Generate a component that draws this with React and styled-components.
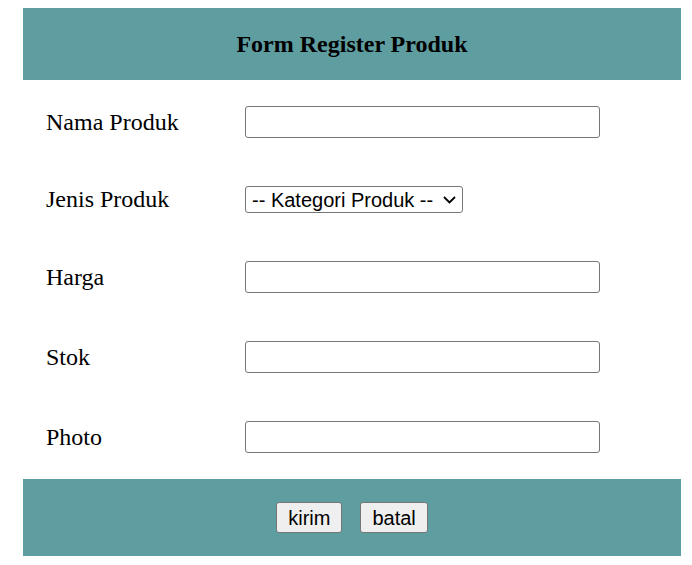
import React from 'react';
import styled, { createGlobalStyle } from 'styled-components';

const GlobalStyle = createGlobalStyle`
  body {
    margin: 8px;
    background: #ffffff;
    font-family: "Liberation Serif", "Times New Roman", serif;
  }
`;

const Wrapper = styled.form`
  width: 658px;
  margin-left: 15px;
  display: flex;
  flex-direction: column;
`;

const Header = styled.div`
  height: 72px;
  background: #5f9ea0;
  display: flex;
  align-items: center;
  justify-content: center;
  font-weight: 700;
  font-size: 24px;
  color: #000;
`;

const Body = styled.div`
  padding: 3px 0 3px 23px;
  display: flex;
  flex-direction: column;
`;

const Row = styled.div`
  height: ${props => props.$h}px;
  display: grid;
  grid-template-columns: 199px 1fr;
  align-items: center;
`;

const Label = styled.label`
  font-size: 24px;
  color: #000;
`;

const TextInput = styled.input`
  box-sizing: border-box;
  width: 355px;
  height: 32px;
  border: 1px solid #767676;
  border-radius: 3px;
  background: #fff;
  padding: 0 4px;
  font-family: "Liberation Sans", Arial, sans-serif;
  font-size: 18px;
`;

const SelectBox = styled.div`
  position: relative;
  justify-self: start;
  width: 218px;
  height: 27px;

  svg {
    position: absolute;
    right: 7px;
    top: 10px;
    width: 13px;
    height: 8px;
    pointer-events: none;
  }
`;

const Select = styled.select`
  appearance: none;
  box-sizing: border-box;
  height: 27px;
  width: 218px;
  border: 1px solid #767676;
  border-radius: 3px;
  background: #fff;
  color: #000;
  font-family: "Liberation Sans", Arial, sans-serif;
  font-size: 20px;
  padding: 0 0 0 6px;
`;

const Footer = styled.div`
  height: 77px;
  background: #5f9ea0;
  display: flex;
  align-items: center;
  justify-content: center;
  gap: 18px;
`;

const Button = styled.button`
  box-sizing: border-box;
  height: 31px;
  padding: 0 11px;
  background: #efefef;
  border: 1px solid #767676;
  border-radius: 3px;
  color: #000;
  font-family: "Liberation Sans", Arial, sans-serif;
  font-size: 20px;
  line-height: 1;
`;

const fields = [
  { label: 'Nama Produk', h: 78 },
  { label: 'Jenis Produk', h: 77, select: true },
  { label: 'Harga', h: 78 },
  { label: 'Stok', h: 82 },
  { label: 'Photo', h: 78 },
];

export default function App() {
  return (
    <>
      <GlobalStyle />
      <Wrapper onSubmit={e => e.preventDefault()}>
        <Header>Form Register Produk</Header>
        <Body>
          {fields.map(f => (
            <Row key={f.label} $h={f.h}>
              <Label>{f.label}</Label>
              {f.select ? (
                <SelectBox>
                  <Select defaultValue="">
                    <option value="">-- Kategori Produk --</option>
                  </Select>
                  <svg viewBox="0 0 13 8">
                    <path d="M1 1l5.5 5.5L12 1" fill="none" stroke="#000" strokeWidth="1.8" />
                  </svg>
                </SelectBox>
              ) : (
                <TextInput type="text" />
              )}
            </Row>
          ))}
        </Body>
        <Footer>
          <Button type="submit">kirim</Button>
          <Button type="reset">batal</Button>
        </Footer>
      </Wrapper>
    </>
  );
}
